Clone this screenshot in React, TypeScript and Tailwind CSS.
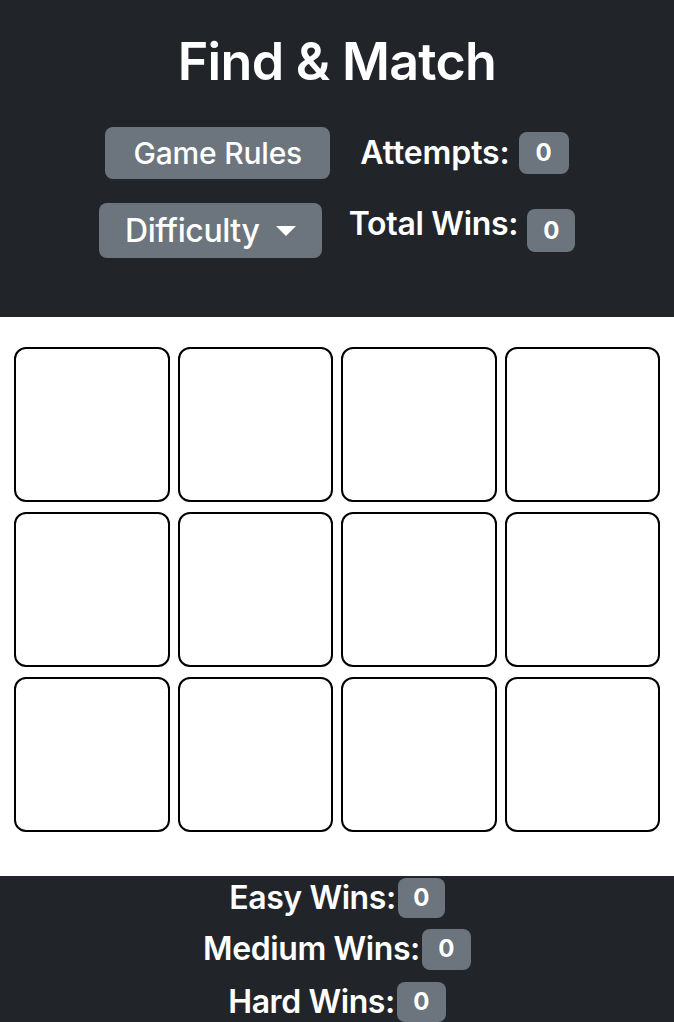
import React from "react";

const font = { fontFamily: "Inter, 'Noto Sans', sans-serif" };

function Badge({ className = "" }: { className?: string }) {
  return (
    <span className={`inline-flex items-center justify-center rounded-[8px] bg-[#6c757d] text-white font-bold ${className}`}>
      0
    </span>
  );
}

export default function App() {
  return (
    <div className="w-[674px] bg-white font-['Inter',sans-serif]" style={font}>
      <header className="h-[317px] bg-[#212529] text-white flex flex-col items-center pt-[30px]">
        <h1 className="text-[52px] leading-[64px] font-semibold tracking-[-0.7px]">Find &amp; Match</h1>
        <div className="mt-[33px] flex items-center gap-[30px]">
          <button className="h-[52px] w-[225px] rounded-[8px] bg-[#6c757d] text-[30px] font-medium tracking-[-0.2px] text-white">
            Game Rules
          </button>
          <div className="flex items-center gap-[9px]">
            <span className="text-[32px] font-semibold tracking-[-0.1px]">Attempts:</span>
            <Badge className="h-[42px] w-[50px] text-[24px]" />
          </div>
        </div>
        <div className="mt-[24px] flex items-center gap-[27px]">
          <button className="h-[55px] w-[223px] rounded-[8px] bg-[#6c757d] text-[32px] font-medium tracking-[-0.4px] text-white flex items-center justify-center gap-[16px]">
            <span>Difficulty</span>
            <svg width="20" height="11" viewBox="0 0 20 11" className="mt-[2px]">
              <path d="M0 0 L20 0 L10 10 Z" fill="white" />
            </svg>
          </button>
          <div className="flex items-center gap-[9px]">
            <span className="text-[32px] font-semibold tracking-[-0.3px] -mt-[14px]">Total Wins:</span>
            <Badge className="h-[43px] w-[48px] text-[24px]" />
          </div>
        </div>
      </header>
      <main className="h-[559px] px-[14px] pt-[30px]">
        <div className="grid grid-cols-4 gap-x-[8px] gap-y-[10px]">
          {Array.from({ length: 12 }).map((_, i) => (
            <div key={i} className="h-[155px] rounded-[12px] border-2 border-black bg-white" />
          ))}
        </div>
      </main>
      <footer className="h-[146px] bg-[#212529] text-white flex flex-col items-center gap-[7px] overflow-hidden">
        <div className="flex h-[44px] items-center">
          <span className="text-[32px] leading-[40px] font-semibold tracking-[-0.4px]">Easy Wins:</span>
          <Badge className="ml-[2px] h-[40px] w-[47px] text-[24px]" />
        </div>
        <div className="flex h-[44px] items-center">
          <span className="text-[32px] leading-[40px] font-semibold tracking-[-0.4px]">Medium Wins:</span>
          <Badge className="ml-[2px] h-[41px] w-[49px] text-[24px]" />
        </div>
        <div className="flex h-[44px] items-center">
          <span className="text-[32px] leading-[40px] font-semibold tracking-[-0.4px] mt-[4px]">Hard Wins:</span>
          <Badge className="ml-[2px] mt-[4px] h-[40px] w-[49px] text-[24px]" />
        </div>
      </footer>
    </div>
  );
}
